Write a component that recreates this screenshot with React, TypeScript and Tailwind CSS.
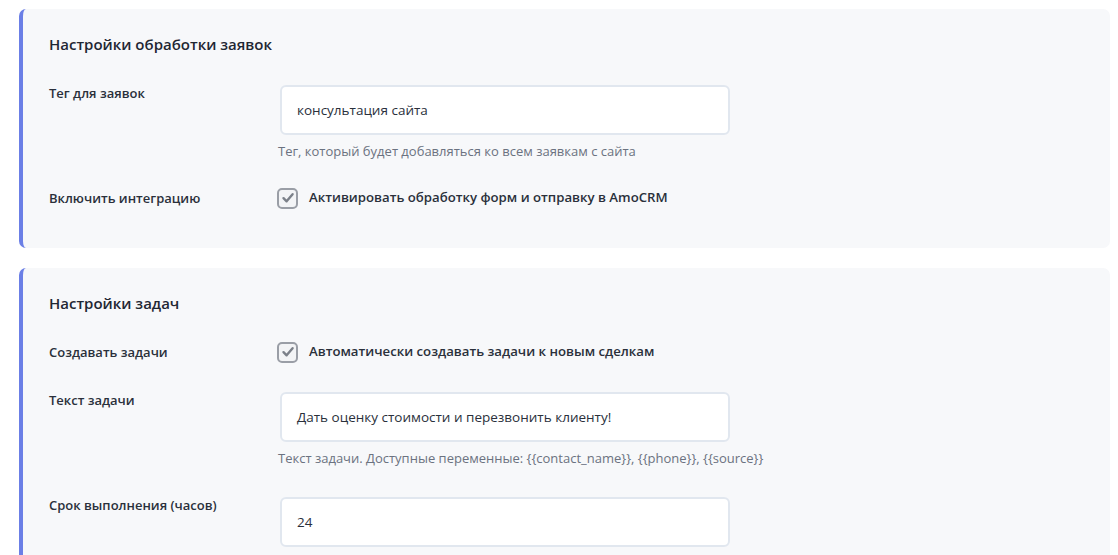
import React from "react";

const font = { fontFamily: '"Open Sans", "Noto Sans", sans-serif' };

function Check() {
  return (
    <span className="flex h-[21px] w-[21px] shrink-0 items-center justify-center rounded-[5px] border-2 border-[#9a9ea6] bg-[#f3f4f6]">
      <svg width="14" height="14" viewBox="0 0 14 14" fill="none">
        <path d="M2.5 7.2 L5.6 10.3 L11.6 3.2" stroke="#7b8089" strokeWidth="2.4" strokeLinecap="round" strokeLinejoin="round" />
      </svg>
    </span>
  );
}

function Row({ label, children }: { label: string; children: React.ReactNode }) {
  return (
    <div className="flex items-start">
      <div className="w-[229px] shrink-0 text-[13px] leading-[20px] font-semibold text-[#2a303b]">{label}</div>
      <div className="flex-1">{children}</div>
    </div>
  );
}

function Field({ value, hint }: { value: string; hint?: string }) {
  return (
    <div>
      <div className="ml-[2px] mt-[2px] flex h-[50px] w-[450px] items-center rounded-[6px] border-2 border-[#e1e7ef] bg-white px-[15px] text-[13.5px] text-[#2a303b]">
        {value}
      </div>
      {hint && <div className="mt-[7px] text-[13px] leading-[18px] text-[#6b7280]">{hint}</div>}
    </div>
  );
}

function CheckField({ text }: { text: string }) {
  return (
    <label className="-ml-[1px] flex h-[20px] items-center gap-[11px]">
      <Check />
      <span className="text-[13.2px] font-semibold text-[#2a303b]">{text}</span>
    </label>
  );
}

function Card({ title, children }: { title: string; children: React.ReactNode }) {
  return (
    <section className="rounded-[7px] border-l-4 border-[#6b7fe6] bg-[#f7f8fa] pb-[40px] pl-[26px] pt-[25px]">
      <h2 className="text-[15px] leading-[20px] font-semibold text-[#1f2733]">{title}</h2>
      <div className="mt-[29px] flex flex-col gap-[28px]">{children}</div>
    </section>
  );
}

export default function App() {
  return (
    <div style={font} className="min-h-[555px] bg-white pl-[19px] pr-[8px] pt-[9px]">
      <div className="flex flex-col gap-[20px]">
        <Card title="Настройки обработки заявок">
          <Row label="Тег для заявок">
            <Field value="консультация сайта" hint="Тег, который будет добавляться ко всем заявкам с сайта" />
          </Row>
          <Row label="Включить интеграцию">
            <CheckField text="Активировать обработку форм и отправку в AmoCRM" />
          </Row>
        </Card>
        <Card title="Настройки задач">
          <Row label="Создавать задачи">
            <CheckField text="Автоматически создавать задачи к новым сделкам" />
          </Row>
          <Row label="Текст задачи">
            <Field
              value="Дать оценку стоимости и перезвонить клиенту!"
              hint="Текст задачи. Доступные переменные: {{contact_name}}, {{phone}}, {{source}}"
            />
          </Row>
          <Row label="Срок выполнения (часов)">
            <Field value="24" />
          </Row>
        </Card>
      </div>
    </div>
  );
}
